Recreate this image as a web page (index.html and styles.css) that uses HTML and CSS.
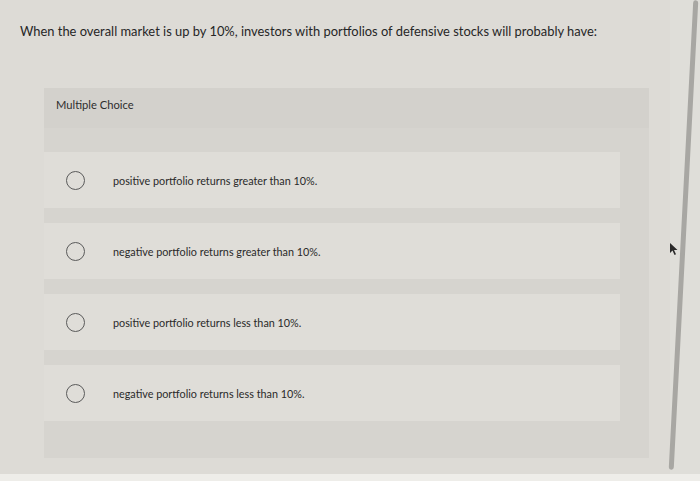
FILE: index.html
```html
<!DOCTYPE html>
<html lang="en">
<head>
<meta charset="utf-8">
<link rel="stylesheet" href="styles.css">
</head>
<body>
<div class="screen">
  <main class="content">
    <p class="question">When the overall market is up by 10%, investors with portfolios of defensive stocks will probably have:</p>
    <section class="panel">
      <div class="panel-head">Multiple Choice</div>
      <div class="options">
        <label class="option"><span class="radio"></span><span class="opt-text">positive portfolio returns greater than 10%.</span></label>
        <label class="option"><span class="radio"></span><span class="opt-text">negative portfolio returns greater than 10%.</span></label>
        <label class="option"><span class="radio"></span><span class="opt-text">positive portfolio returns less than 10%.</span></label>
        <label class="option"><span class="radio"></span><span class="opt-text">negative portfolio returns less than 10%.</span></label>
      </div>
    </section>
  </main>
  <div class="scrollbar"><div class="thumb"></div></div>
</div>
<div class="bezel"></div>
<svg class="cursor" width="10" height="14" viewBox="0 0 10 14"><path d="M1 1 L1 11 L3.5 8.5 L5.5 13 L7 12.3 L5 8 L8.5 8 Z" fill="#2a2a2a"/></svg>
</body>
</html>
```
FILE: styles.css
```css
* { box-sizing: border-box; }
html, body { margin: 0; padding: 0; }
body {
  width: 700px;
  height: 481px;
  overflow: hidden;
  background: #dddbd6;
  font-family: "Lato", "Open Sans", Arial, sans-serif;
  color: #2b2b2b;
  position: relative;
}
.screen {
  display: flex;
  height: 474px;
}
.content {
  flex: 1;
}
.question {
  margin: 22px 0 0 20px;
  font-size: 12.9px;
  line-height: 18px;
  color: #262626;
}
.panel {
  margin: 48px 0 0 44px;
  width: 605px;
  height: 370px;
  background: #d6d4cf;
  display: flex;
  flex-direction: column;
}
.panel-head {
  height: 40px;
  padding: 10px 0 0 12px;
  font-size: 11.2px;
  color: #2e2e2e;
  background: #d3d1cc;
}
.options {
  display: flex;
  flex-direction: column;
  gap: 15px;
  padding: 24px 0 0 0;
}
.option {
  display: flex;
  align-items: center;
  height: 56px;
  width: 576px;
  background: #dfddd8;
}
.radio {
  width: 19px;
  height: 19px;
  border: 1.3px solid #5a5a5a;
  border-radius: 50%;
  margin-left: 22px;
  flex: none;
}
.opt-text {
  margin-left: 28px;
  font-size: 10.8px;
  color: #2a2a2a;
}
.scrollbar {
  width: 30px;
  display: flex;
  justify-content: center;
  padding-right: 4px;
  background: #dfded9;
}
.thumb {
  width: 5px;
  height: 470px;
  background: #a8a7a3;
  border-radius: 3px;
  transform: rotate(3deg);
}
.bezel {
  height: 7px;
  background: #eeede9;
}
.cursor {
  position: absolute;
  left: 669px;
  top: 242px;
}
```
